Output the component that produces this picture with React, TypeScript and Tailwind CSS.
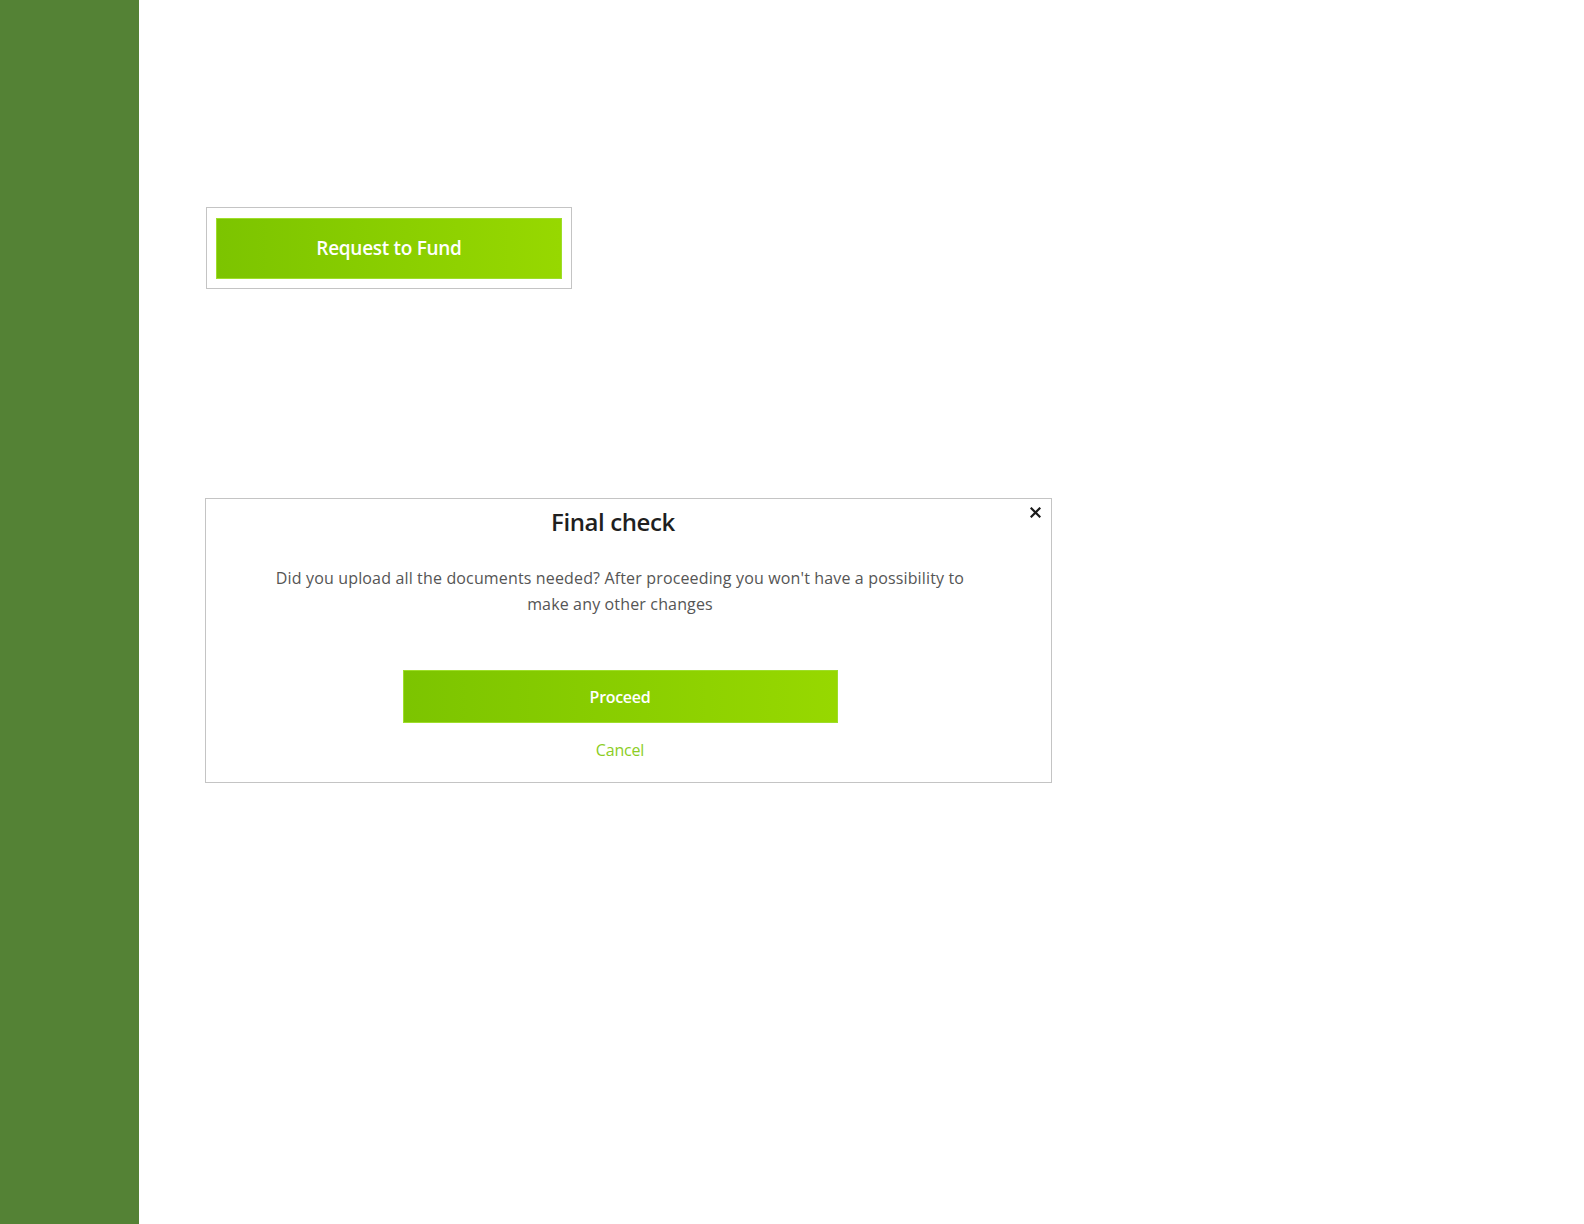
import React from "react";

export default function App() {
  return (
    <div className="flex min-h-[1224px] w-full bg-white" style={{ fontFamily: '"Open Sans", "Noto Sans", sans-serif' }}>
      <div className="w-[139px] shrink-0 bg-[#548235]" />
      <div className="flex flex-col pl-[66px] pt-[207px]">
        <div className="ml-[1px] w-[366px] border border-[#c4c4c4] px-[9px] pt-[10px] pb-[9px]">
          <button className="flex h-[61px] w-full items-center justify-center border border-[#9ede2a] bg-gradient-to-r from-[#7cc400] to-[#97d800] text-[19px] font-semibold tracking-[-0.3px] text-white">
            Request to Fund
          </button>
        </div>
        <div className="relative mt-[209px] flex h-[285px] w-[847px] flex-col items-center border border-[#c4c4c4] pr-[17px] pt-[7px]">
          <button className="absolute right-[10px] top-[7px] flex h-[12px] w-[12px] items-center justify-center">
            <svg width="11" height="11" viewBox="0 0 11 11">
              <path d="M1.5 1.5 L9.5 9.5 M9.5 1.5 L1.5 9.5" stroke="#1a1a1a" strokeWidth="2.2" strokeLinecap="square" />
            </svg>
          </button>
          <h2 className="mr-[14px] h-[32px] text-[24px] leading-[32px] font-semibold tracking-[-0.4px] text-[#1f1f1f]">Final check</h2>
          <p className="mt-[27px] w-[704px] text-center text-[16px] leading-[26px] tracking-[0.15px] text-[#555555]">
            Did you upload all the documents needed? After proceeding you won't have a possibility to make any other changes
          </p>
          <button className="mt-[53px] flex h-[53px] w-[435px] items-center justify-center border border-[#9ede2a] bg-gradient-to-r from-[#7cc400] to-[#97d800] text-[16px] font-semibold tracking-[-0.3px] text-white">
            Proceed
          </button>
          <button className="mt-[15px] text-[16px] leading-[24px] tracking-[-0.2px] text-[#8ccd24]">Cancel</button>
        </div>
      </div>
    </div>
  );
}
